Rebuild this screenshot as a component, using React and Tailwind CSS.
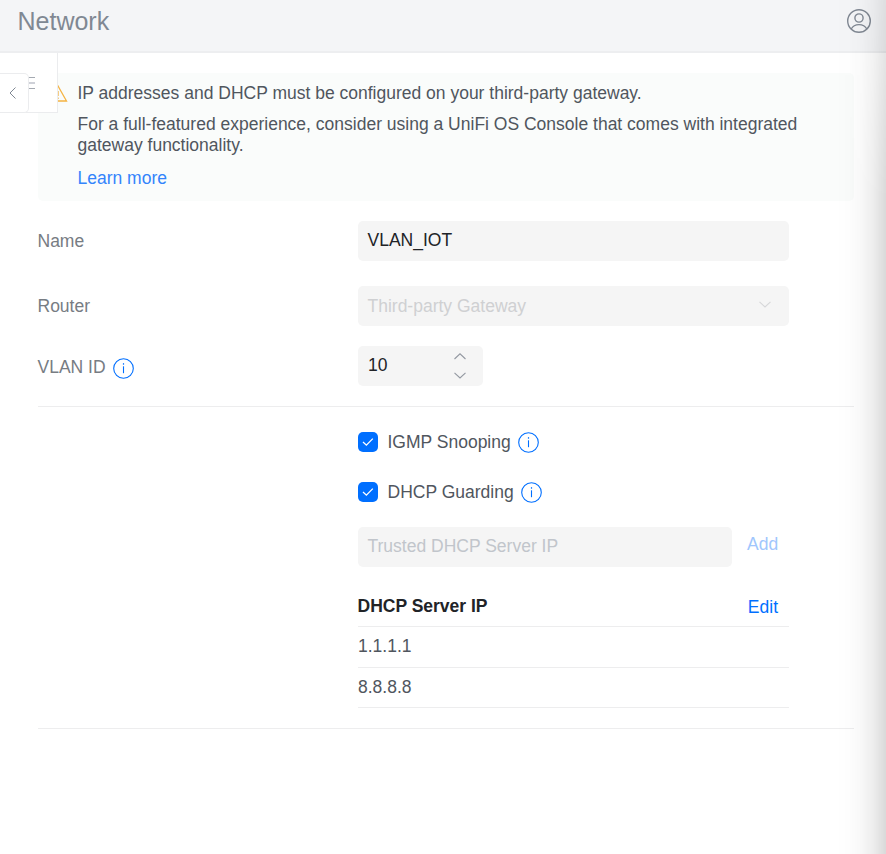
import React from "react";

function InfoIcon({ className = "" }) {
  return (
    <svg className={`h-[21px] w-[21px] shrink-0 ${className}`} viewBox="0 0 21 21" fill="none" stroke="#006fff">
      <circle cx="10.5" cy="10.5" r="9.8" strokeWidth="1.1" />
      <path d="M10.5 8.3v6.9" strokeWidth="1.1" />
      <path d="M10.5 5.2v1.5" strokeWidth="1.2" />
    </svg>
  );
}

function Chevron({ up, className = "" }) {
  return (
    <svg className={`h-[7px] w-3 ${className}`} viewBox="0 0 12 7" fill="none" stroke="currentColor" strokeWidth="1.1">
      <path d={up ? "M.5 6 6 .8 11.5 6" : "M.5 .8 6 6 11.5 .8"} />
    </svg>
  );
}

function CheckRow({ label }) {
  return (
    <label className="flex h-[22px] items-center">
      <span className="flex h-5 w-5 items-center justify-center rounded-[5px] bg-[#006fff]">
        <svg className="h-5 w-5" viewBox="0 0 20 20" fill="none" stroke="#fff" strokeWidth="1.3">
          <path d="M5 10 8.4 13.2 14.8 6.6" />
        </svg>
      </span>
      <span className="ml-[9.5px] text-[#50565e]">{label}</span>
      <InfoIcon className="ml-[7.5px]" />
    </label>
  );
}

export default function App() {
  return (
    <div className="relative h-[854px] w-[886px] overflow-hidden bg-white font-['Liberation_Sans',Arial,sans-serif] text-[17.5px] leading-[21px] text-[#50565e]">
      <header className="flex h-[53px] justify-between border-b-2 border-[#edeef0] bg-[#f4f5f7] pl-[17.5px] pr-[15px]">
        <h1 className="mt-[6px] text-[25px] leading-[30px] text-[#808893]">Network</h1>
        <svg className="mt-[9px] h-6 w-6" viewBox="0 0 24 24" fill="none" stroke="#808893" strokeWidth="1.4">
          <circle cx="12" cy="12" r="11.3" />
          <circle cx="12" cy="9" r="4.1" />
          <path d="M4.2 20C5.600 17.300 8.500 15.600 12 15.600s6.400 1.700 7.800 4.400" />
        </svg>
      </header>

      <main className="ml-[38px] w-[816px] pt-5">
        <section className="h-32 rounded-[5px] bg-[#fafcfb] pl-[39.500px] pt-[10px]">
          <div className="flex">
            <svg className="-ml-[30px] mr-[10px] mt-[2px] h-[17px] w-5" viewBox="0 0 20 17" fill="none" stroke="#f5b342" strokeWidth="1.3">
              <path d="M10 1 1 16h17.500zM10 6v5M10 12.500v1.500" />
            </svg>
            <p>IP addresses and DHCP must be configured on your third-party gateway.</p>
          </div>
          <p className="mt-[10px] w-[735px]">
            For a full-featured experience, consider using a UniFi OS Console that comes with integrated gateway functionality.
          </p>
          <a className="mt-3 block text-[#3384fb]">Learn more</a>
        </section>

        <div className="mt-5 flex h-10 items-center">
          <span className="w-80 shrink-0"><span className="-ml-[0.5px] text-[#777c83]">Name</span></span>
          <div className="flex h-10 w-[431px] items-center rounded-[5px] bg-[#f5f5f5] pb-[2px] pl-[9.5px] text-[#212327]">VLAN_IOT</div>
        </div>
        <div className="mt-[25px] flex h-10 items-center">
          <span className="w-80 shrink-0"><span className="-ml-[0.5px] text-[#777c83]">Router</span></span>
          <div className="flex h-10 w-[431px] items-center justify-between rounded-[5px] bg-[#f5f5f5] pl-[9.5px] pr-[18px] text-[#cfd0d2]">
            <span>Third-party Gateway</span>
            <Chevron className="-mt-1 text-[#d6d7d9]" />
          </div>
        </div>
        <div className="mt-5 flex h-10 items-center">
          <span className="flex w-80 shrink-0 items-center text-[#777c83]">
            <span className="-ml-[0.5px] mt-[2px]">VLAN ID</span>
            <InfoIcon className="ml-[7.5px] mt-1" />
          </span>
          <div className="flex h-10 w-[125px] items-center justify-between rounded-[5px] bg-[#f5f5f5] pl-[10px] pr-[17px] text-[#212327]">
            <span className="-mt-[2px]">10</span>
            <span className="flex flex-col gap-3 text-[#9398a1]">
              <Chevron up />
              <Chevron />
            </span>
          </div>
        </div>

        <div className="mt-5 border-y border-[#ededee] pb-5 pl-80 pt-6">
          <CheckRow label="IGMP Snooping" />
          <div className="mt-7">
            <CheckRow label="DHCP Guarding" />
          </div>
          <div className="mt-6 flex h-10">
            <div className="flex w-[374px] items-center rounded-[5px] bg-[#f5f5f5] pb-[2px] pl-[9.5px] text-[#c1c5cb]">
              Trusted DHCP Server IP
            </div>
            <button className="mb-[5px] ml-[15px] text-[#a0c6fd]">Add</button>
          </div>
          <div className="mt-5 w-[431px]">
            <div className="flex h-10 items-center justify-between border-b border-[#ededee] pr-[11px]">
              <span className="-ml-[0.5px] font-bold text-[#212327]">DHCP Server IP</span>
              <a className="mt-[2px] text-[#006fff]">Edit</a>
            </div>
            <div className="flex h-[41px] items-center border-b border-[#ededee] pb-[2px]">1.1.1.1</div>
            <div className="flex h-10 items-center border-b border-[#ededee]">8.8.8.8</div>
          </div>
        </div>
      </main>

      <div className="absolute left-0 top-[53px] h-[60px] w-[58px] border-b border-r border-[#ebecee] bg-white">
        <svg className="absolute left-[28px] top-[23px] h-[14px] w-[7px]" viewBox="0 0 7 14" strokeWidth="1">
          <path d="M0 1.500h7M0 12.500h7" stroke="#a4a9b1" />
          <path d="M0 7h7" stroke="#cfd1d8" strokeWidth="2" />
        </svg>
        <div className="absolute left-0 top-5 flex h-10 w-[29px] items-center rounded-r-[5px] border border-l-0 border-[#ebecee] bg-white pl-[9px]">
          <svg className="h-3 w-[7px]" viewBox="0 0 7 12" fill="none" stroke="#808893" strokeWidth="1">
            <path d="M6.500.5 1 6l5.500 5.500" />
          </svg>
        </div>
      </div>

      <div className="pointer-events-none absolute right-0 top-0 h-full w-[50px] bg-[linear-gradient(to_right,rgba(0,0,0,0),rgba(0,0,0,0.008)_25%,rgba(0,0,0,0.028)_50%,rgba(0,0,0,0.07)_75%,rgba(0,0,0,0.15))] [mask-image:linear-gradient(to_bottom,rgba(0,0,0,0.6),#000_200px)]" />
    </div>
  );
}
